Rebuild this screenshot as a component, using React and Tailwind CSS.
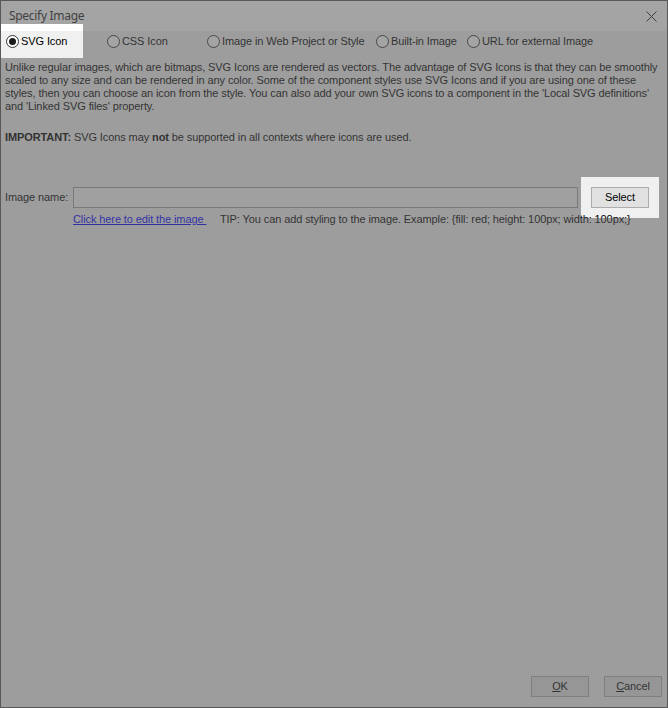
import React, { useState } from 'react';

const sourceTypes = [
  { id: 'svg', label: 'SVG Icon', width: 'w-[77px] mr-[24px]' },
  { id: 'css', label: 'CSS Icon', width: 'w-[100px]' },
  { id: 'web', label: 'Image in Web Project or Style', width: 'w-[169px]' },
  { id: 'builtin', label: 'Built-in Image', width: 'w-[91px]' },
  { id: 'url', label: 'URL for external Image', width: 'w-[150px]' },
];

const Radio = ({ checked }) => (
  <span className="w-[13px] h-[13px] rounded-full border border-[#333] bg-white flex items-center justify-center shrink-0">
    {checked && <span className="w-[7px] h-[7px] rounded-full bg-[#1a1a1a]" />}
  </span>
);

const WinButton = ({ children, className = '' }) => (
  <button className={`h-[21px] w-[58px] border border-[#adadad] bg-[#e1e1e1] text-[11px] text-black leading-none ${className}`}>
    {children}
  </button>
);

const App = () => {
  const [source, setSource] = useState('svg');
  const [imageName, setImageName] = useState('');

  return (
    <div className="relative w-[668px] h-[708px] border border-[#575757] bg-[#f0f0f0] flex flex-col text-black font-['Liberation_Sans',Tahoma,sans-serif] text-[11px] tracking-[-0.1px]">
      {/* Title bar */}
      <div className="h-[30px] bg-white flex items-center justify-between pl-[8px] pr-[10px] shrink-0">
        <span className="text-[12px] tracking-[-0.3px] text-[#222] font-['Noto_Sans','Segoe_UI',sans-serif]">Specify Image</span>
        <svg width="11" height="11" viewBox="0 0 11 11" className="mt-[1px]">
          <path d="M0.5 0.5 L10.5 10.5 M10.5 0.5 L0.5 10.5" stroke="#1a1a1a" strokeWidth="1" fill="none" />
        </svg>
      </div>

      {/* Image source options */}
      <div className="flex items-center h-[17px] mt-[2px] pl-[5px]">
        {sourceTypes.map((t) => (
          <label
            key={t.id}
            onClick={() => setSource(t.id)}
            className={`${t.width} flex items-center gap-[2px] cursor-pointer`}
          >
            <Radio checked={source === t.id} />
            <span className="whitespace-nowrap">{t.label}</span>
          </label>
        ))}
      </div>

      {/* Description */}
      <div className="px-[4px] mt-[11px] leading-[13px] whitespace-nowrap">
        <p>
          Unlike regular images, which are bitmaps, SVG Icons are rendered as vectors. The advantage of SVG Icons is that they can be smoothly<br />
          scaled to any size and can be rendered in any color. Some of the component styles use SVG Icons and if you are using one of these<br />
          styles, then you can choose an icon from the style. You can also add your own SVG icons to a component in the 'Local SVG definitions'<br />
          and 'Linked SVG files' property.
        </p>
        <p className="mt-[18px]">
          <b>IMPORTANT:</b> SVG Icons may <b>not</b> be supported in all contexts where icons are used.
        </p>
      </div>

      {/* Image name */}
      <div className="flex items-center mt-[43px] pl-[4px]">
        <span className="w-[68px]">Image name:</span>
        <input
          value={imageName}
          onChange={(e) => setImageName(e.target.value)}
          className="w-[505px] h-[21px] border border-[#a0a0a0] bg-[#f5f5f5] outline-none px-1"
        />
        <WinButton className="ml-[13px]">Select</WinButton>
      </div>
      <div className="flex items-center pl-[72px] mt-[4px] leading-[14px]">
        <a href="#" className="text-[#0000ff] underline w-[147px]">Click here to edit the image&nbsp;</a>
        <span>TIP: You can add styling to the image. Example: {'{fill: red; height: 100px; width: 100px;}'}</span>
      </div>

      <div className="flex-1" />

      {/* Footer */}
      <div className="flex justify-end gap-[15px] pr-[5px] pb-[10px]">
        <WinButton><span className="underline">O</span>K</WinButton>
        <WinButton><span className="underline">C</span>ancel</WinButton>
      </div>

      {/* Guided tour dim layer with cut-outs around the "SVG Icon" option and the Select button */}
      <div className="absolute -inset-px bg-[#5a5a5a]/55 z-10 pointer-events-none [clip-path:path(evenodd,'M0_0H668V708H0ZM0_24H83V58H0ZM581_177H659V218H581Z')]" />
    </div>
  );
};

export default App;
